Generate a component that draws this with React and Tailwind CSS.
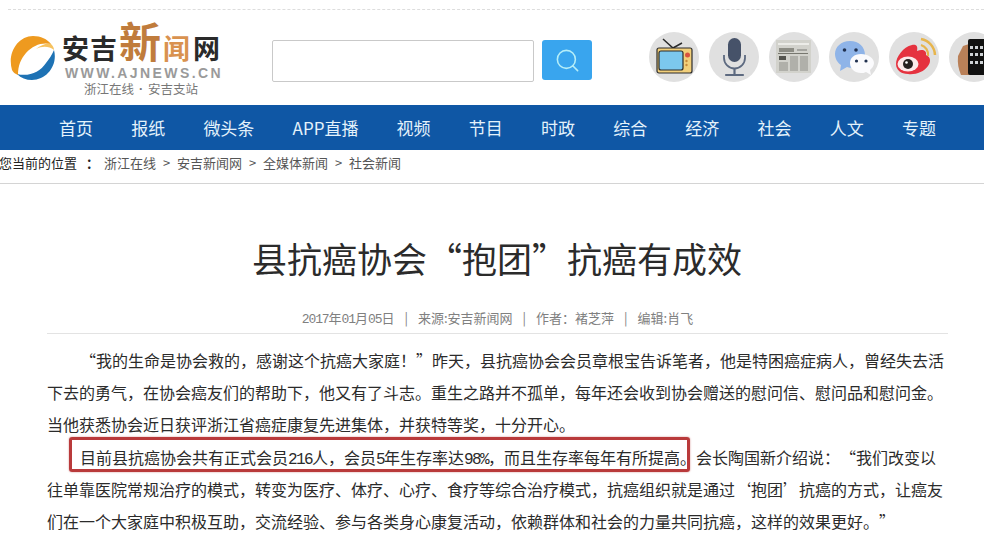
import { Search } from 'lucide-react';

const navItems = ['首页', '报纸', '微头条', 'APP直播', '视频', '节目', '时政', '综合', '经济', '社会', '人文', '专题'];
const crumbs = ['浙江在线', '安吉新闻网', '全媒体新闻', '社会新闻'];
const cjk = { fontFamily: '"Noto Sans CJK SC", "Noto Sans", sans-serif' };

const TvIcon = () => (
  <svg viewBox="0 0 50 50" className="w-full h-full">
    <path d="M14 7 L24 16 L33 11" fill="none" stroke="#2b2b2b" strokeWidth="1.5" />
    <rect x="8" y="16" width="35" height="25" rx="2" fill="#f2cf7a" stroke="#2b2b2b" strokeWidth="1.2" />
    <rect x="10" y="19" width="24" height="19" rx="2" fill="#7cc8ee" stroke="#2b2b2b" strokeWidth="1.2" />
    <circle cx="38.5" cy="23" r="2.5" fill="#d9533f" />
    <circle cx="37.5" cy="29" r="1.2" fill="#c98a3a" />
    <circle cx="37.5" cy="33" r="1.2" fill="#c98a3a" />
  </svg>
);

const MicIcon = () => (
  <svg viewBox="0 0 50 50" className="w-full h-full">
    <rect x="19" y="6" width="13" height="24" rx="6.5" fill="#465269" />
    <path d="M15 23 V26 A10.5 10.5 0 0 0 36 26 V23" fill="none" stroke="#5d6a80" strokeWidth="1.8" />
    <path d="M25.5 37 V42" stroke="#5d6a80" strokeWidth="2.2" />
    <path d="M17 43 H34" stroke="#5d6a80" strokeWidth="2.2" strokeLinecap="round" />
  </svg>
);

const NewsIcon = () => (
  <svg viewBox="0 0 50 50" className="w-full h-full">
    <rect x="7" y="8" width="35" height="33" fill="#d2d2cc" />
    <rect x="9" y="11" width="31" height="2" fill="#ecece8" />
    <rect x="10" y="16" width="15" height="4" fill="#8d8d85" />
    <rect x="28" y="17" width="10" height="2" fill="#a5a5a0" />
    <rect x="9" y="21" width="30" height="1" fill="#77776f" />
    <rect x="10" y="24" width="7" height="4" fill="#55554f" />
    <rect x="10" y="30" width="9" height="9" fill="#b0b0aa" />
    <rect x="21" y="24" width="8" height="15" fill="#b0b0aa" />
    <rect x="31" y="24" width="8" height="15" fill="#b0b0aa" />
  </svg>
);

const WechatIcon = () => (
  <svg viewBox="0 0 50 50" className="w-full h-full">
    <path d="M21 9 C12 9 6 15 6 22 C6 27 9 31 12 33 L11 39 L18 35 C20 36 24 36 26 35 L36 23 C36 15 30 9 21 9 Z" fill="#8fb4e8" />
    <circle cx="15.5" cy="18" r="1.8" fill="#20304f" />
    <circle cx="27" cy="18" r="1.8" fill="#20304f" />
    <path d="M32 22 C25 22 21 26 21 31 C21 37 26 41 32 41 C34 41 35 41 37 40 L42 43 L41 38 C43 36 45 34 45 31 C45 26 39 22 32 22 Z" fill="#fbfbfd" />
    <circle cx="27.5" cy="29" r="1.6" fill="#20304f" />
    <circle cx="37" cy="29" r="1.6" fill="#20304f" />
  </svg>
);

const WeiboIcon = () => (
  <svg viewBox="0 0 50 50" className="w-full h-full">
    <path d="M7 32 C7 25 14 15 23 13 C28 12 29 15 28 19 C33 17 38 18 37 23 C42 25 42 30 39 34 C35 40 26 43 19 42 C12 42 7 38 7 32 Z" fill="#e5323f" />
    <ellipse cx="19" cy="32" rx="10.5" ry="7.5" fill="#fbeaea" />
    <circle cx="19" cy="32" r="5" fill="#26201f" />
    <circle cx="17.5" cy="30.5" r="1.3" fill="#fff" />
    <path d="M32 13 A10 10 0 0 1 39 24" fill="none" stroke="#e7b54c" strokeWidth="2.2" />
    <path d="M32 7 A17 17 0 0 1 46 23" fill="none" stroke="#e7b54c" strokeWidth="2.5" />
  </svg>
);

const PhoneIcon = () => (
  <svg viewBox="0 0 50 50" className="w-full h-full">
    <path d="M9 24 L14 14 L20 12 L22 43 L12 43 Q8 34 9 24 Z" fill="#b98058" />
    <rect x="19" y="7" width="26" height="36" rx="2" fill="#111" />
    <rect x="21" y="14" width="3" height="3" fill="#cfd3d6" />
    <rect x="26" y="14" width="3" height="3" fill="#cfd3d6" />
    <rect x="31" y="14" width="3" height="3" fill="#cfd3d6" />
    <rect x="21" y="21" width="3" height="3" fill="#cfd3d6" />
    <rect x="26" y="21" width="3" height="3" fill="#cfd3d6" />
    <rect x="31" y="21" width="3" height="3" fill="#cfd3d6" />
    <rect x="21" y="29" width="3" height="3" fill="#cfd3d6" />
    <rect x="26" y="29" width="3" height="3" fill="#cfd3d6" />
    <rect x="31" y="29" width="3" height="3" fill="#cfd3d6" />
  </svg>
);

const Logo = () => (
  <div className="flex shrink-0 w-[272px] pl-[9px] pt-[15px]">
    <svg viewBox="0 0 46 46" className="w-[46px] h-[46px] mt-[10px] shrink-0">
      <path d="M45 15 C49 30 38 45 23 45 C17 45 12 43 8 39 C20 42 31 37 37 28 C40 24 43 20 45 15 Z" fill="#1e72b4" />
      <path d="M3 35 C-2 18 9 1 24 1 C32 1 38 4 42 9 C33 7 24 10 17 18 C12 24 9 30 9 40 C6 39 4 37 3 35 Z" fill="#ee9a1f" />
      <path d="M42 9 C44 11 45 13 45 15 C40 11 33 11 27 14 C32 10 37 8 42 9 Z" fill="#f6c25f" />
    </svg>
    <div className="ml-[7px] flex flex-col items-start" style={cjk}>
      <div className="flex items-end h-[36px] font-bold leading-none">
        <span className="text-[27px] text-[#2a2a2a] tracking-[1px]">安吉</span>
        <span className="text-[42px] text-[#c07c3c] ml-[1px]">新</span>
        <span className="text-[27px] text-[#d9924f] ml-[2px]">闻</span>
        <span className="text-[27px] text-[#2a2a2a] ml-[3px]">网</span>
      </div>
      <div className="mt-[5px] ml-[3px] text-[14px] leading-[14px] font-bold text-[#9a9a9a] tracking-[2.4px] whitespace-nowrap" style={{ fontFamily: '"Liberation Sans", sans-serif' }}>
        WWW.AJNEWS.CN
      </div>
      <div className="mt-[1px] ml-[22px] text-[12.5px] leading-[16px] text-[#777] whitespace-nowrap flex">
        <span>浙江在线</span>
        <span className="w-[14px] text-center font-['Liberation_Sans'] font-bold">·</span>
        <span>安吉支站</span>
      </div>
    </div>
  </div>
);

const Header = () => (
  <div className="h-[105px] pt-[9px] bg-white overflow-hidden">
    <div className="ml-[8px] border-t border-dashed border-[#dddddd]" />
    <div className="flex">
      <Logo />
      <div className="flex mt-[30px] h-[42px]">
        <div className="w-[262px] h-[42px] bg-white border border-[#c9c9c9] rounded-[2px]" />
        <button className="ml-[8px] w-[50px] h-[40px] bg-[#39a5ee] rounded-[3px] flex items-center justify-center">
          <Search size={27} strokeWidth={1.4} className="text-[#b5eef8]" />
        </button>
      </div>
      <div className="flex gap-[10px] ml-[57px] mt-[22px] shrink-0">
        {[TvIcon, MicIcon, NewsIcon, WechatIcon, WeiboIcon, PhoneIcon].map((Icon, i) => (
          <div key={i} className="w-[50px] h-[50px] rounded-full bg-[#e0e0e0] overflow-hidden shrink-0">
            <Icon />
          </div>
        ))}
      </div>
    </div>
  </div>
);

const Digits = ({ children }) => (
  <span className="font-['Liberation_Mono'] tracking-[-1.6px] leading-none">{children}</span>
);

const MetaDigits = ({ children }) => (
  <span className="font-['Liberation_Mono'] tracking-[-1.1px]">{children}</span>
);

const App = () => {
  return (
    <div className="w-[984px] h-[541px] overflow-hidden bg-white text-[#333]" style={cjk}>
      <Header />

      <nav className="h-[45px] bg-[#0f57a5] flex items-center pl-[59px] gap-[38.2px] text-[17px] text-[#e4f2fb] whitespace-nowrap">
        {navItems.map((item) => (
          <span key={item}>{item}</span>
        ))}
      </nav>

      <div className="h-[34px] pb-[8px] border-b border-[#d4d4d4] flex items-center text-[13px] whitespace-nowrap text-[#555]">
        <span className="text-[#222] -ml-[1px] w-[105px]">您当前的位置<span className="ml-[9px] font-bold">：</span></span>
        {crumbs.map((c, i) => (
          <span key={c} className="flex items-center">
            {i > 0 && <span className="w-[21px] text-center">&gt;</span>}
            {c}
          </span>
        ))}
      </div>

      <h1 className="mt-[49px] h-[50px] pl-[10px] text-[35px] leading-[50px] text-center text-[#2b2b2b] font-normal whitespace-nowrap">
        县抗癌协会“抱团”抗癌有成效
      </h1>

      <div className="ml-[47px] w-[901px]">
        <div className="mt-[26px] h-[25px] border-b border-[#e3e3e3] flex justify-center gap-[10px] text-[13px] leading-[18px] text-[#808080] whitespace-nowrap">
          <span><MetaDigits>2017</MetaDigits>年<MetaDigits>01</MetaDigits>月<MetaDigits>05</MetaDigits>日</span>
          <span>|</span>
          <span>来源:安吉新闻网</span>
          <span>|</span>
          <span>作者：褚芝萍</span>
          <span>|</span>
          <span>编辑:肖飞</span>
        </div>

        <div className="mt-[10px] text-[16px] leading-[32.2px] text-[#2b2b2b] whitespace-nowrap [text-spacing-trim:space-all]">
          <p className="pl-[33px] h-[32.2px]">“我的生命是协会救的，感谢这个抗癌大家庭！”昨天，县抗癌协会会员章根宝告诉笔者，他是特困癌症病人，曾经失去活</p>
          <p className="h-[32.2px]">下去的勇气，在协会癌友们的帮助下，他又有了斗志。重生之路并不孤单，每年还会收到协会赠送的慰问信、慰问品和慰问金。</p>
          <p className="h-[32.2px]">当他获悉协会近日获评浙江省癌症康复先进集体，并获特等奖，十分开心。</p>
          <p className="pl-[33px] h-[32.2px]">
            <span className="relative inline-block h-[32.2px]">
              目前县抗癌协会共有正式会员<Digits>216</Digits>人，会员<Digits>5</Digits>年生存率达<Digits>98%</Digits>，而且生存率每年有所提高。
              <span className="absolute -left-[11px] right-[6px] top-[-4px] bottom-[1px] border-[3px] border-[#b93a3b] rounded-[3px] shadow-[0_0_2px_#d08a8a]" />
            </span>
            会长陶国新介绍说：“我们改变以
          </p>
          <p className="h-[32.2px]">往单靠医院常规治疗的模式，转变为医疗、体疗、心疗、食疗等综合治疗模式，抗癌组织就是通过‘抱团’抗癌的方式，让癌友</p>
          <p className="h-[32.2px]">们在一个大家庭中积极互助，交流经验、参与各类身心康复活动，依赖群体和社会的力量共同抗癌，这样的效果更好。”</p>
        </div>
      </div>
    </div>
  );
};

export default App;
